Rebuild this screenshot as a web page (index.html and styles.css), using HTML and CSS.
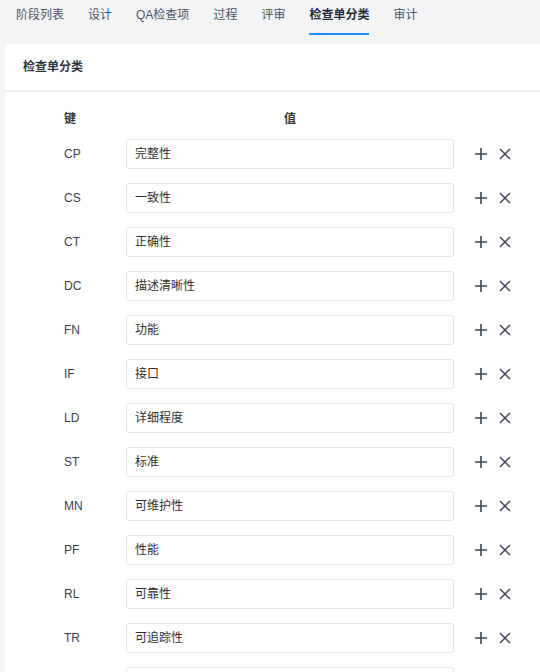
FILE: index.html
```html
<!DOCTYPE html>
<html lang="zh">
<head>
<meta charset="utf-8">
<link rel="stylesheet" href="styles.css">
</head>
<body>
<nav class="tabs">
  <span class="tab">阶段列表</span>
  <span class="tab">设计</span>
  <span class="tab">QA检查项</span>
  <span class="tab">过程</span>
  <span class="tab">评审</span>
  <span class="tab active">检查单分类</span>
  <span class="tab">审计</span>
</nav>
<section class="card">
  <div class="card-title">检查单分类</div>
  <div class="table">
    <div class="row head">
      <div class="key">键</div>
      <div class="val-head">值</div>
      <div></div>
    </div>
    <div class="row"><div class="key">CP</div><div class="input">完整性</div><div class="actions"><svg class="ic" viewBox="0 0 14 14"><path d="M7 1v12M1 7h12"/></svg><svg class="ic x" viewBox="0 0 12 12"><path d="M1 1l10 10M11 1L1 11"/></svg></div></div>
    <div class="row"><div class="key">CS</div><div class="input">一致性</div><div class="actions"><svg class="ic" viewBox="0 0 14 14"><path d="M7 1v12M1 7h12"/></svg><svg class="ic x" viewBox="0 0 12 12"><path d="M1 1l10 10M11 1L1 11"/></svg></div></div>
    <div class="row"><div class="key">CT</div><div class="input">正确性</div><div class="actions"><svg class="ic" viewBox="0 0 14 14"><path d="M7 1v12M1 7h12"/></svg><svg class="ic x" viewBox="0 0 12 12"><path d="M1 1l10 10M11 1L1 11"/></svg></div></div>
    <div class="row"><div class="key">DC</div><div class="input">描述清晰性</div><div class="actions"><svg class="ic" viewBox="0 0 14 14"><path d="M7 1v12M1 7h12"/></svg><svg class="ic x" viewBox="0 0 12 12"><path d="M1 1l10 10M11 1L1 11"/></svg></div></div>
    <div class="row"><div class="key">FN</div><div class="input">功能</div><div class="actions"><svg class="ic" viewBox="0 0 14 14"><path d="M7 1v12M1 7h12"/></svg><svg class="ic x" viewBox="0 0 12 12"><path d="M1 1l10 10M11 1L1 11"/></svg></div></div>
    <div class="row"><div class="key">IF</div><div class="input">接口</div><div class="actions"><svg class="ic" viewBox="0 0 14 14"><path d="M7 1v12M1 7h12"/></svg><svg class="ic x" viewBox="0 0 12 12"><path d="M1 1l10 10M11 1L1 11"/></svg></div></div>
    <div class="row"><div class="key">LD</div><div class="input">详细程度</div><div class="actions"><svg class="ic" viewBox="0 0 14 14"><path d="M7 1v12M1 7h12"/></svg><svg class="ic x" viewBox="0 0 12 12"><path d="M1 1l10 10M11 1L1 11"/></svg></div></div>
    <div class="row"><div class="key">ST</div><div class="input">标准</div><div class="actions"><svg class="ic" viewBox="0 0 14 14"><path d="M7 1v12M1 7h12"/></svg><svg class="ic x" viewBox="0 0 12 12"><path d="M1 1l10 10M11 1L1 11"/></svg></div></div>
    <div class="row"><div class="key">MN</div><div class="input">可维护性</div><div class="actions"><svg class="ic" viewBox="0 0 14 14"><path d="M7 1v12M1 7h12"/></svg><svg class="ic x" viewBox="0 0 12 12"><path d="M1 1l10 10M11 1L1 11"/></svg></div></div>
    <div class="row"><div class="key">PF</div><div class="input">性能</div><div class="actions"><svg class="ic" viewBox="0 0 14 14"><path d="M7 1v12M1 7h12"/></svg><svg class="ic x" viewBox="0 0 12 12"><path d="M1 1l10 10M11 1L1 11"/></svg></div></div>
    <div class="row"><div class="key">RL</div><div class="input">可靠性</div><div class="actions"><svg class="ic" viewBox="0 0 14 14"><path d="M7 1v12M1 7h12"/></svg><svg class="ic x" viewBox="0 0 12 12"><path d="M1 1l10 10M11 1L1 11"/></svg></div></div>
    <div class="row"><div class="key">TR</div><div class="input">可追踪性</div><div class="actions"><svg class="ic" viewBox="0 0 14 14"><path d="M7 1v12M1 7h12"/></svg><svg class="ic x" viewBox="0 0 12 12"><path d="M1 1l10 10M11 1L1 11"/></svg></div></div>
    <div class="row"><div class="key"></div><div class="input"></div><div class="actions"></div></div>
  </div>
</section>
</body>
</html>
```
FILE: styles.css
```css
html, body {
  margin: 0;
  padding: 0;
  background: #f3f4f6;
  overflow: hidden;
  font-family: "Liberation Sans", "Noto Sans CJK SC", sans-serif;
  color: #303133;
}
.tabs {
  display: flex;
  gap: 24px;
  padding-left: 16px;
  height: 35px;
}
.tab {
  font-size: 12px;
  line-height: 14px;
  padding-top: 8px;
  padding-bottom: 11px;
  color: #4b5563;
  border-bottom: 2px solid transparent;
  white-space: nowrap;
}
.tab.active {
  color: #1f2937;
  font-weight: bold;
  border-bottom-color: #1890ff;
}
.card {
  margin-top: 9px;
  margin-left: 5px;
  width: 560px;
  background: #fff;
  border-radius: 4px;
}
.card-title {
  height: 46px;
  line-height: 46px;
  padding-left: 18px;
  font-size: 12px;
  font-weight: bold;
  color: #303641;
  border-bottom: 2px solid #eef0f2;
}
.table {
  padding: 17px 0 0 59px;
  display: flex;
  flex-direction: column;
  gap: 14px;
}
.row {
  display: grid;
  grid-template-columns: 62px 328px 80px;
  align-items: center;
  height: 30px;
}
.row.head {
  height: 14px;
  margin-bottom: 2px;
}
.key {
  font-size: 12px;
  color: #374151;
}
.head .key, .val-head {
  font-weight: bold;
  color: #303641;
}
.val-head {
  font-size: 12px;
  text-align: center;
}
.input {
  box-sizing: border-box;
  height: 30px;
  border: 1px solid #e1e4e8;
  border-radius: 3px;
  padding-left: 8px;
  line-height: 28px;
  font-size: 12px;
  color: #303133;
}
.actions {
  display: flex;
  align-items: center;
  gap: 11px;
  padding-left: 20px;
}
.ic {
  width: 14px;
  height: 14px;
  fill: none;
  stroke: #3d4756;
  stroke-width: 1.6;
}
.ic.x {
  width: 12px;
  height: 12px;
  stroke-width: 1.5;
}
```
